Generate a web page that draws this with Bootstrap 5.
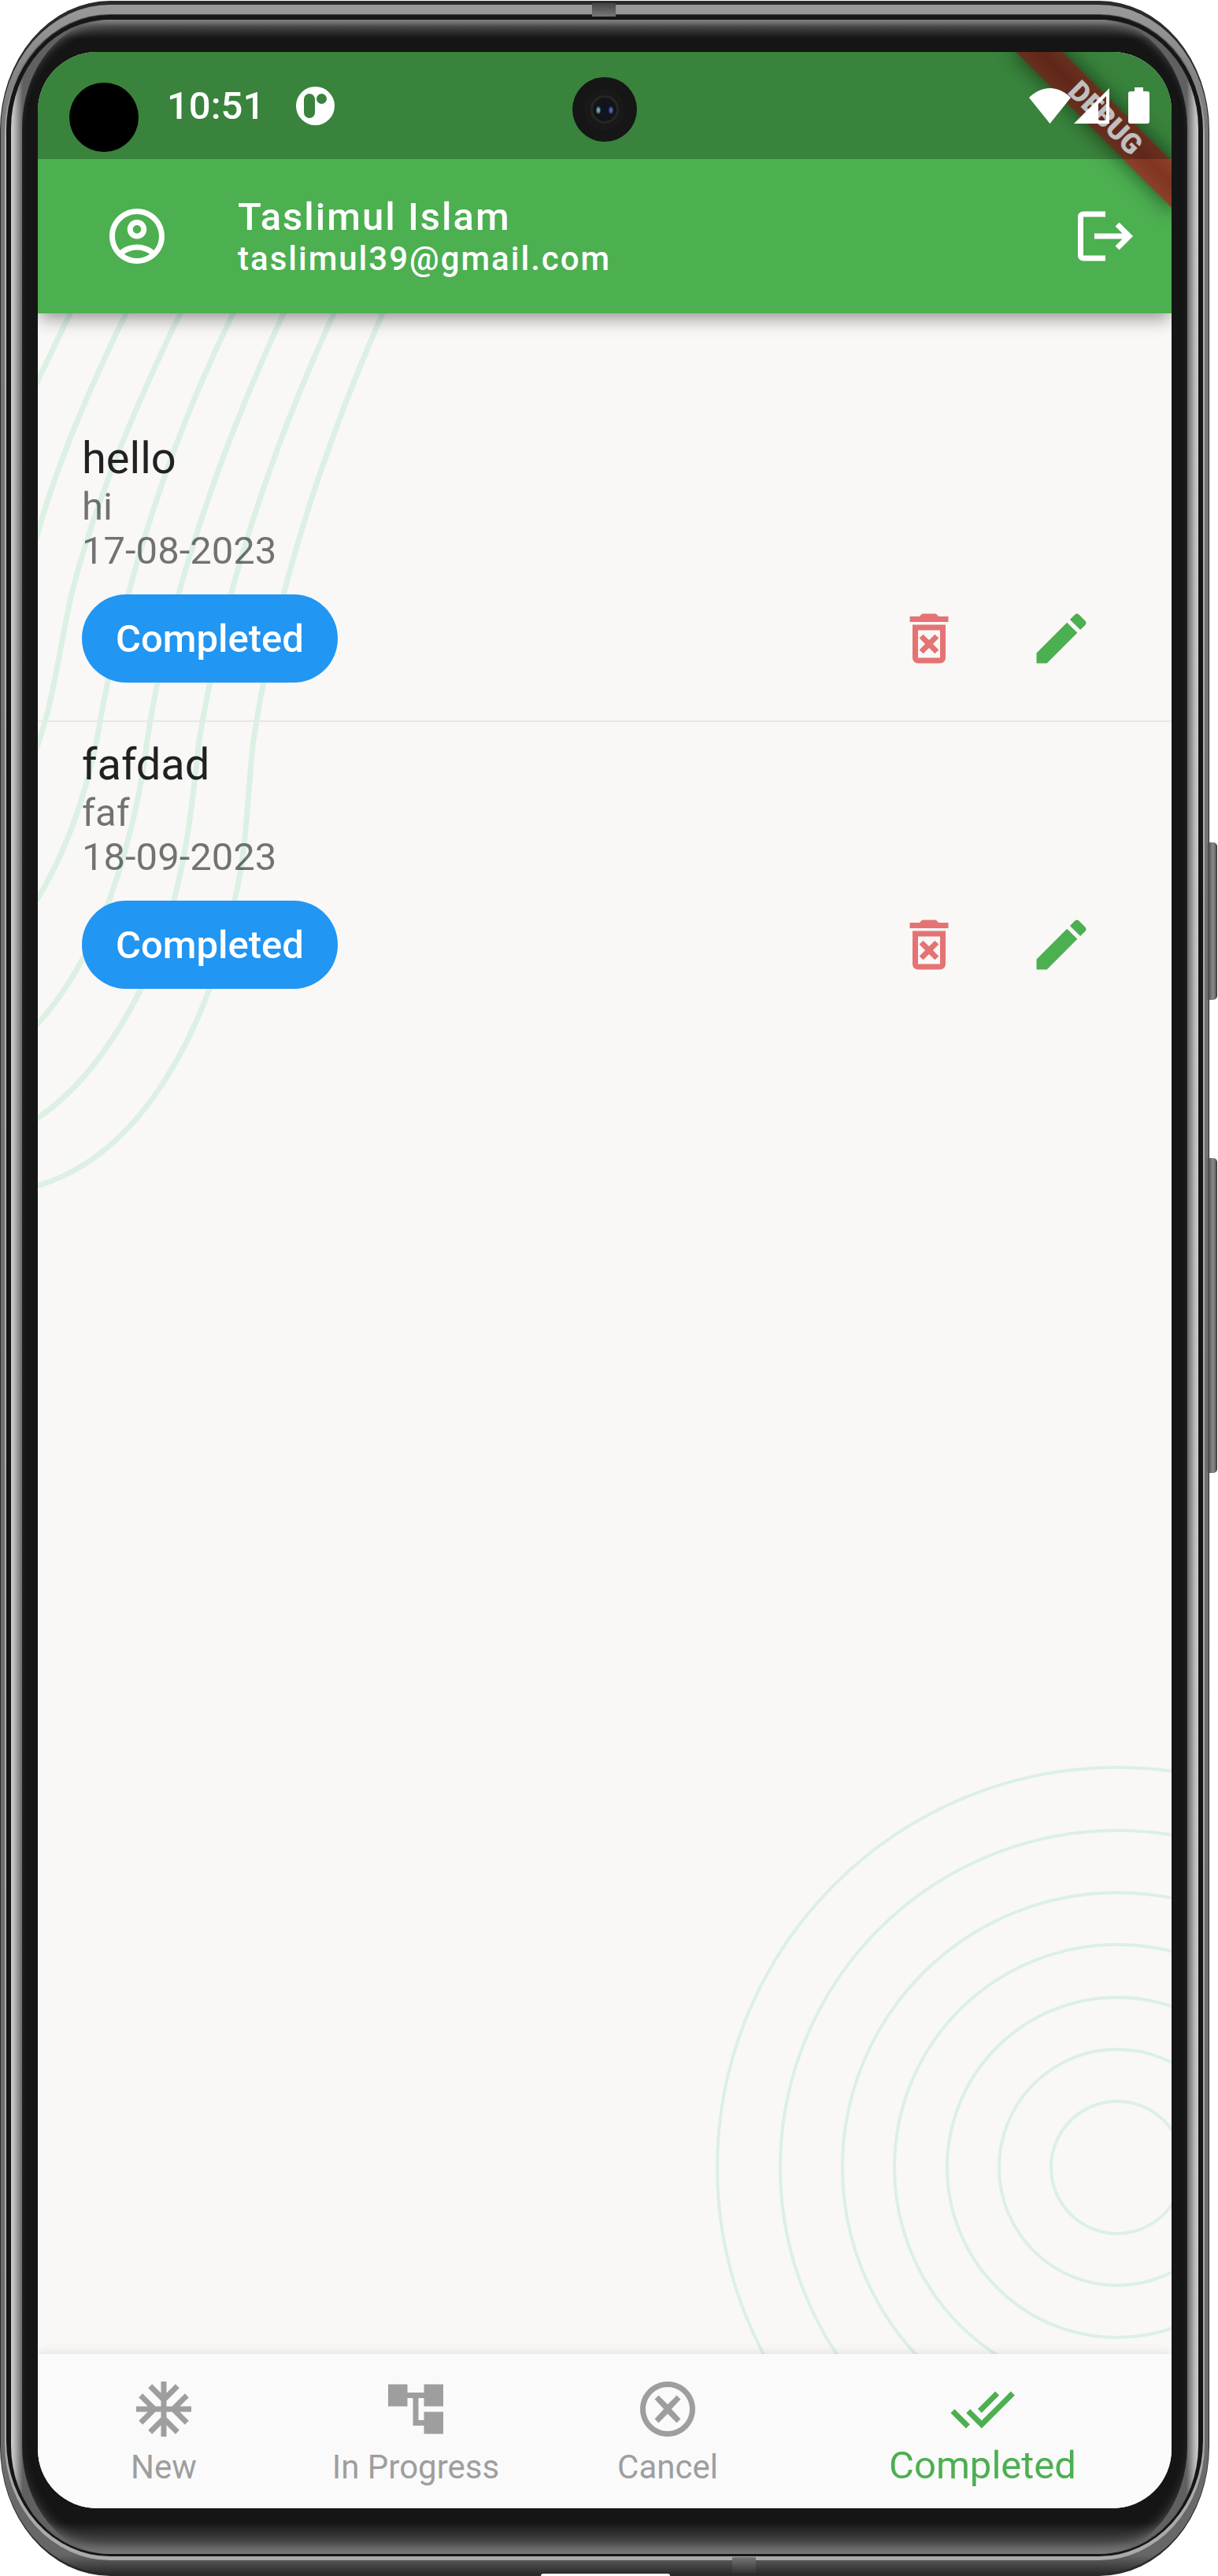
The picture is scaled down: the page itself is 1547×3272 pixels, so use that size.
<!DOCTYPE html>
<html lang="en">
<head>
<meta charset="utf-8">
<meta name="viewport" content="width=device-width, initial-scale=1">
<title>Task Manager</title>
<link href="https://cdn.jsdelivr.net/npm/bootstrap@5.3.0/dist/css/bootstrap.min.css" rel="stylesheet">
<style>
  :root { --app-green: #4caf50; --app-bg: #f9f8f6; }
  body { background: #fff; font-family: Roboto, "Liberation Sans", sans-serif; }
  svg { display: block; flex: none; }

  /* device shell: nested rings, outermost first */
  .device { min-height: 100vh; padding: 1px 11px 0 0; }
  .ring-edge { background: #2a2a2a; border-radius: 140px / 165px; padding: 5px 1px 3px; }
  .ring-metal { background: linear-gradient(#999, #777 160px, #6c6c6c calc(100% - 160px), #666 calc(100% - 24px), #2a2a2a); border-radius: 139px / 160px; padding: 12px 5px 17px; }
  .ring-glint { background: linear-gradient(#444, #b5b5b5 160px, #aaa); border-radius: 134px / 148px; padding: 1px 2px 5px; }
  .ring-seal { background: #161616; border-radius: 132px / 147px; padding: 6px 6px 3px; }
  .ring-glass { background: linear-gradient(90deg, #d0d0d0, #b4b4b4 5px, #606060 15px, #777 50%, #606060 calc(100% - 15px), #b4b4b4 calc(100% - 5px), #d0d0d0); border-radius: 124px / 138px; padding: 0 14px; }
  .bezel { background: linear-gradient(#888, #444 8px, #151515 24px, #151515 calc(100% - 40px), #444 calc(100% - 16px), #7a7a7a); border-radius: 112px / 138px; padding: 41px 20px 58px; box-shadow: inset 0 14px 14px -12px #777, inset 0 -14px 18px -12px #777; }
  .screen { border-radius: 75px; background: var(--app-bg); }

  .side-key { right: 1px; width: 12px; border-radius: 0 5px 5px 0; background: linear-gradient(90deg, #444, #888 50%, #777 75%, #333); }
  .key-power { top: 1070px; height: 200px; }
  .key-volume { top: 1471px; height: 400px; }
  .seam-top { left: 752px; top: 4px; width: 30px; height: 17px; background: linear-gradient(#444, #777); }
  .seam-bottom { left: 930px; bottom: 4px; width: 30px; height: 20px; background: linear-gradient(#777, #333); }
  .port { left: 687px; bottom: 0; width: 164px; height: 3px; border-radius: 12px 12px 0 0; background: #fff; }

  /* status bar and app bar */
  .app-head { background: var(--app-green); box-shadow: 0 8px 22px -2px rgba(0,0,0,.42); z-index: 2; }
  .status-row { height: 136px; padding: 0 28px 0 164px; background: rgba(0,0,0,.25); z-index: 2; }
  .status-time { font-size: 49px; line-height: 57px; font-weight: 500; margin-right: 40px; }
  .hole { left: 40px; top: 39px; width: 88px; height: 88px; background: #000; }
  .lens { left: 50%; top: 32px; width: 82px; height: 82px; margin-left: -41px; }
  .ribbon { top: 63px; right: -56px; width: 280px; height: 42px; transform: rotate(45deg); z-index: 1;
    background: linear-gradient(#8a4228, #813422 50%, #8a4228); box-shadow: 0 0 25px 2px rgba(0,0,0,.5);
    font-size: 36px; line-height: 42px; font-weight: 900; color: #fff; }
  .app-row { height: 196px; padding: 0 42px 0 84px; gap: 86px; }
  .user-name { font-size: 49px; line-height: 57px; font-weight: 500; letter-spacing: 2px; }
  .user-mail { font-size: 42px; line-height: 49px; font-weight: 500; letter-spacing: 2px; }

  /* task list */
  .task-list { padding-top: 130px; }
  .task { padding: 21px 56px; }
  .task + .task { border-top: 2px solid #e9e8e6; }
  .task-name { font-size: 56px; line-height: 67px; font-weight: 400; color: #212121; }
  .task-note { font-size: 49px; line-height: 56px; color: rgba(0,0,0,.54); }
  .task-row { height: 166px; }
  .chip { height: 112px; padding: 0 43px; font-size: 49px; line-height: 57px; font-weight: 500; color: #fff; background: #2196f3; border: 0; }
  .tool { width: 168px; height: 166px; }
  .c-red { color: #e57373; }
  .c-green { color: var(--app-green); }

  /* bottom navigation */
  .tab-bar { background: #fafafa; height: 196px; padding-top: 28px; box-shadow: 0 0 14px rgba(0,0,0,.12); z-index: 2; }
  .tab { flex: 2 1 0; color: #9e9e9e; font-size: 42px; line-height: 64px; }
  .tab-on { flex-grow: 3; color: var(--app-green); font-size: 49px; line-height: 60px; }
</style>
</head>
<body>
<div class="device position-relative d-flex flex-column">
  <div class="side-key key-power position-absolute"></div>
  <div class="side-key key-volume position-absolute"></div>
  <div class="ring-edge d-flex flex-column flex-grow-1">
  <div class="ring-metal d-flex flex-column flex-grow-1">
  <div class="ring-glint d-flex flex-column flex-grow-1">
  <div class="ring-seal d-flex flex-column flex-grow-1">
  <div class="ring-glass d-flex flex-column flex-grow-1">
  <div class="bezel d-flex flex-column flex-grow-1">
    <div class="screen position-relative overflow-hidden d-flex flex-column flex-grow-1">

      <header class="app-head position-relative text-white">
        <div class="status-row position-relative d-flex align-items-center">
          <span class="hole position-absolute rounded-circle"></span>
          <span class="status-time">10:51</span>
          <svg width="49" height="49" viewBox="0 0 49 49" aria-hidden="true"><path fill="#fff" fill-rule="evenodd" d="M24.500 0a24.500 24.500 0 1 1 0 49a24.500 24.500 0 0 1 0-49zM10 16v17a7 7 0 0 0 14 0V16a7 7 0 0 0-14 0zM32.500 9a6.500 6.500 0 1 0 0 13a6.500 6.500 0 0 0 0-13z"/></svg>
          <svg class="lens position-absolute" viewBox="0 0 82 82" aria-hidden="true">
            <circle cx="41" cy="41" r="41" fill="#161616"/><circle cx="41" cy="41" r="26" fill="#191919"/>
            <circle cx="41" cy="41" r="18" fill="#262626"/><circle cx="41" cy="41" r="15" fill="#141414"/>
            <circle cx="41" cy="42" r="11" fill="#10141c"/>
            <ellipse cx="33" cy="42" rx="3" ry="5" fill="#38565c"/><ellipse cx="49" cy="42" rx="3" ry="5" fill="#2c3768"/>
            <ellipse cx="33" cy="42" rx="2" ry="3" fill="#69a3a8"/><ellipse cx="49" cy="42" rx="2" ry="3" fill="#5063b0"/>
          </svg>
          <div class="ms-auto d-flex align-items-center" role="img" aria-label="Wi-Fi, mobile signal and battery">
            <svg width="53" height="45" viewBox="0 0 53 45"><path fill="#fff" d="M26.500 45L0 12C7 5 16 0 26.500 0S46 5 53 12z"/></svg>
            <svg class="ms-1" width="45" height="45" viewBox="0 0 45 45"><path fill="#fff" fill-rule="evenodd" d="M45 0v45H0zM41 10L31 20v21h10z"/></svg>
            <svg class="ms-4" width="27" height="46" viewBox="0 0 27 46"><path fill="#fff" d="M8 0h11v5h5q3 0 3 3v35q0 3-3 3H3q-3 0-3-3V8q0-3 3-3h5z"/></svg>
          </div>
        </div>
        <div class="ribbon position-absolute text-center">DEBUG</div>
        <div class="app-row d-flex align-items-center">
          <svg width="84" height="84" viewBox="0 0 24 24" fill="#fff" aria-hidden="true"><path d="M12 2C6.480 2 2 6.480 2 12s4.480 10 10 10 10-4.480 10-10S17.520 2 12 2zM7.350 18.500C8.660 17.560 10.260 17 12 17s3.340.56 4.650 1.500C15.340 19.440 13.740 20 12 20s-3.340-.56-4.650-1.500zm10.790-1.380C16.450 15.800 14.320 15 12 15s-4.450.8-6.140 2.120C4.700 15.730 4 13.950 4 12c0-4.420 3.580-8 8-8s8 3.580 8 8c0 1.950-.7 3.730-1.860 5.120z"/><path d="M12 6c-1.930 0-3.500 1.570-3.500 3.500S10.070 13 12 13s3.500-1.570 3.500-3.500S13.930 6 12 6zm0 5c-.83 0-1.500-.67-1.500-1.500S11.170 8 12 8s1.500.67 1.500 1.500S12.830 11 12 11z"/></svg>
          <div class="flex-grow-1">
            <div class="user-name">Taslimul Islam</div>
            <div class="user-mail">taslimul39@gmail.com</div>
          </div>
          <button type="button" class="btn p-0 border-0 text-white" aria-label="Log out">
            <svg width="84" height="84" viewBox="0 0 24 24" fill="currentColor"><path d="M17 7l-1.410 1.410L18.170 11H8v2h10.170l-2.580 2.580L17 17l5-5-5-5zM4 5h8V3H4c-1.100 0-2 .9-2 2v14c0 1.100.9 2 2 2h8v-2H4V5z"/></svg>
          </button>
        </div>
      </header>

      <main class="position-relative flex-grow-1 overflow-hidden">
        <svg class="position-absolute top-0 start-0" width="450" height="1130" viewBox="48 398 450 1130" fill="none" stroke="#dcf0e4" stroke-width="7" aria-hidden="true">
          <path d="M94 388L38 504"/>
          <path d="M165 388L160 398C120 480 75 580 48 677l-6 20"/>
          <path d="M234 388L229 398C172 515 120 640 91 754C76 820 68 890 48 946l-8 22"/>
          <path d="M301 388L296 398C208 578 152 765 122 945C108 1010 85 1080 48 1141l-10 15"/>
          <path d="M365 388L360 398C277 578 214 760 187 940C179 1010 163 1075 139 1143C115 1205 85 1260 48 1300l-10 11"/>
          <path d="M429 388L424 398C341 578 283 760 253 940C245 1010 240 1070 221 1143C195 1245 130 1365 48 1420l-12 8"/>
          <path d="M491 388L486 398C407 578 349 760 322 940C314 1005 314 1080 298 1143C265 1300 185 1465 48 1506l-12 4"/>
        </svg>
        <svg class="position-absolute bottom-0 end-0" width="588" height="760" viewBox="900 2230 588 760" fill="none" stroke="#dcf0e4" stroke-width="4" aria-hidden="true">
          <circle cx="1419" cy="2753" r="84"/><circle cx="1419" cy="2753" r="150"/><circle cx="1419" cy="2753" r="216"/>
          <circle cx="1419" cy="2753" r="283"/><circle cx="1419" cy="2753" r="349"/><circle cx="1419" cy="2753" r="428"/><circle cx="1419" cy="2753" r="508"/>
        </svg>

        <ul class="task-list position-relative list-unstyled mb-0">
          <li class="task">
            <h2 class="task-name m-0">hello</h2>
            <div class="task-note">hi</div>
            <div class="task-note">17-08-2023</div>
            <div class="task-row d-flex align-items-center">
              <button type="button" class="btn chip rounded-pill me-auto">Completed</button>
              <button type="button" class="btn tool c-red border-0 p-0 d-flex align-items-center justify-content-center" aria-label="Delete hello"><svg width="84" height="84" viewBox="0 0 24 24" fill="currentColor"><path d="M14.120 10.470L12 12.590l-2.130-2.120-1.410 1.410L10.590 14l-2.120 2.120 1.410 1.410L12 15.410l2.120 2.120 1.410-1.410L13.410 14l2.120-2.120zM15.500 4l-1-1h-5l-1 1H5v2h14V4zM6 19c0 1.100.9 2 2 2h8c1.100 0 2-.9 2-2V7H6v12zM8 9h8v10H8V9z"/></svg></button>
              <button type="button" class="btn tool c-green border-0 p-0 d-flex align-items-center justify-content-center" aria-label="Edit hello"><svg width="84" height="84" viewBox="0 0 24 24" fill="currentColor"><path d="M3 17.250V21h3.750L17.810 9.940l-3.750-3.750L3 17.250zM20.710 7.040c.39-.39.39-1.020 0-1.410l-2.340-2.340c-.39-.39-1.020-.39-1.410 0l-1.830 1.830 3.750 3.750 1.830-1.830z"/></svg></button>
            </div>
          </li>
          <li class="task">
            <h2 class="task-name m-0">fafdad</h2>
            <div class="task-note">faf</div>
            <div class="task-note">18-09-2023</div>
            <div class="task-row d-flex align-items-center">
              <button type="button" class="btn chip rounded-pill me-auto">Completed</button>
              <button type="button" class="btn tool c-red border-0 p-0 d-flex align-items-center justify-content-center" aria-label="Delete fafdad"><svg width="84" height="84" viewBox="0 0 24 24" fill="currentColor"><path d="M14.120 10.470L12 12.590l-2.130-2.120-1.410 1.410L10.590 14l-2.120 2.120 1.410 1.410L12 15.410l2.120 2.120 1.410-1.410L13.410 14l2.120-2.120zM15.500 4l-1-1h-5l-1 1H5v2h14V4zM6 19c0 1.100.9 2 2 2h8c1.100 0 2-.9 2-2V7H6v12zM8 9h8v10H8V9z"/></svg></button>
              <button type="button" class="btn tool c-green border-0 p-0 d-flex align-items-center justify-content-center" aria-label="Edit fafdad"><svg width="84" height="84" viewBox="0 0 24 24" fill="currentColor"><path d="M3 17.250V21h3.750L17.810 9.940l-3.750-3.750L3 17.250zM20.710 7.040c.39-.39.39-1.020 0-1.410l-2.340-2.340c-.39-.39-1.020-.39-1.410 0l-1.830 1.830 3.750 3.750 1.830-1.830z"/></svg></button>
            </div>
          </li>
        </ul>
      </main>

      <nav class="tab-bar position-relative d-flex" aria-label="Task status">
        <a href="#new" class="tab d-flex flex-column align-items-center text-decoration-none">
          <svg width="84" height="84" viewBox="0 0 24 24" fill="currentColor" aria-hidden="true"><path d="M22 11h-4.170l3.240-3.240-1.410-1.420L15 11h-2V9l4.660-4.660-1.420-1.410L13 6.170V2h-2v4.170L7.760 2.930 6.340 4.340 11 9v2H9L4.340 6.340 2.930 7.760 6.170 11H2v2h4.170l-3.240 3.240 1.410 1.420L9 13h2v2l-4.660 4.660 1.420 1.410L11 17.830V22h2v-4.170l3.240 3.240 1.420-1.410L13 15v-2h2l4.660 4.660 1.410-1.420L17.830 13H22z"/></svg>
          <span>New</span>
        </a>
        <a href="#progress" class="tab d-flex flex-column align-items-center text-decoration-none">
          <svg width="84" height="84" viewBox="0 0 24 24" fill="currentColor" aria-hidden="true"><path d="M22 11V3h-7v3H9V3H2v8h7V8h2v10h4v3h7v-8h-7v3h-2V8h2v3z"/></svg>
          <span>In Progress</span>
        </a>
        <a href="#cancel" class="tab d-flex flex-column align-items-center text-decoration-none">
          <svg width="84" height="84" viewBox="0 0 24 24" fill="currentColor" aria-hidden="true"><path d="M15.300 7L12 10.300 8.700 7 7.300 8.400 10.600 12 7.300 15.600 8.700 17 12 13.700 15.300 17 16.700 15.600 13.400 12 16.700 8.400 15.300 7zM12 2C6.470 2 2 6.470 2 12s4.470 10 10 10 10-4.470 10-10S17.530 2 12 2zm0 18c-4.410 0-8-3.590-8-8s3.590-8 8-8 8 3.590 8 8-3.590 8-8 8z"/></svg>
          <span>Cancel</span>
        </a>
        <a href="#completed" class="tab tab-on d-flex flex-column align-items-center text-decoration-none" aria-current="page">
          <svg width="84" height="84" viewBox="0 0 24 24" fill="currentColor" aria-hidden="true"><path d="M18 7l-1.410-1.410-6.340 6.340 1.410 1.410L18 7zm4.240-1.410L11.660 16.170 7.480 12l-1.410 1.410L11.660 19l12-12-1.420-1.410zM.41 13.410L6 19l1.410-1.410L1.830 12 .41 13.410z"/></svg>
          <span>Completed</span>
        </a>
      </nav>
    </div>
  </div></div></div></div></div></div>
  <div class="seam-top position-absolute"></div>
  <div class="seam-bottom position-absolute"></div>
  <div class="port position-absolute"></div>
</div>
<script src="https://cdn.jsdelivr.net/npm/bootstrap@5.3.0/dist/js/bootstrap.bundle.min.js"></script>
</body>
</html>
